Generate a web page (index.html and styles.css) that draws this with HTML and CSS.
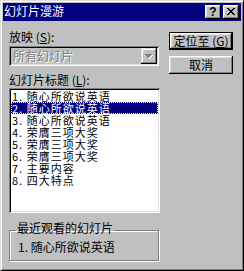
FILE: index.html
```html
<!DOCTYPE html>
<html>
<head>
<meta charset="utf-8">
<link rel="stylesheet" href="styles.css">
</head>
<body>
<div class="window">
  <div class="titlebar">
    <span class="title">幻灯片漫游</span>
    <div class="ctrls">
      <span class="tbtn help">?</span>
      <span class="tbtn close">
        <svg width="8" height="7" viewBox="0 0 8 7" shape-rendering="crispEdges">
          <rect x="0" y="0" width="2" height="1"/><rect x="6" y="0" width="2" height="1"/>
          <rect x="1" y="1" width="2" height="1"/><rect x="5" y="1" width="2" height="1"/>
          <rect x="2" y="2" width="4" height="1"/>
          <rect x="3" y="3" width="2" height="1"/>
          <rect x="2" y="4" width="4" height="1"/>
          <rect x="1" y="5" width="2" height="1"/><rect x="5" y="5" width="2" height="1"/>
          <rect x="0" y="6" width="2" height="1"/><rect x="6" y="6" width="2" height="1"/>
        </svg>
      </span>
    </div>
  </div>
  <div class="body">
    <div class="left">
      <div class="label">放映 (<u>S</u>):</div>
      <div class="combo">
        <span class="combo-text">所有幻灯片</span>
        <span class="dd">
          <svg width="8" height="5" viewBox="0 0 8 5" shape-rendering="crispEdges">
            <g fill="#fff">
              <rect x="1" y="1" width="7" height="1"/><rect x="2" y="2" width="5" height="1"/>
              <rect x="3" y="3" width="3" height="1"/><rect x="4" y="4" width="1" height="1"/>
            </g>
            <g fill="#808080">
              <rect x="0" y="0" width="7" height="1"/><rect x="1" y="1" width="5" height="1"/>
              <rect x="2" y="2" width="3" height="1"/><rect x="3" y="3" width="1" height="1"/>
            </g>
          </svg>
        </span>
      </div>
      <div class="label label2">幻灯片标题 (<u>L</u>):</div>
      <ul class="list">
        <li>1. 随心所欲说英语</li>
        <li class="sel">2. 随心所欲说英语</li>
        <li>3. 随心所欲说英语</li>
        <li>4. 荣膺三项大奖</li>
        <li>5. 荣膺三项大奖</li>
        <li>6. 荣膺三项大奖</li>
        <li>7. 主要内容</li>
        <li>8. 四大特点</li>
      </ul>
      <fieldset class="group">
        <legend>最近观看的幻灯片</legend>
        <div class="recent">1. 随心所欲说英语</div>
      </fieldset>
    </div>
    <div class="right">
      <div class="btn default">定位至 (<u>G</u>)</div>
      <div class="btn">取消</div>
    </div>
  </div>
</div>
</body>
</html>
```
FILE: styles.css
```css
html, body {
  margin: 0;
  padding: 0;
  background: #c0c0c0;
}

.window {
  width: 244px;
  height: 271px;
  box-sizing: border-box;
  background: #c0c0c0;
  border: 1px solid;
  border-color: #dfdfdf #000 #000 #dfdfdf;
  box-shadow: inset 1px 1px 0 #fff, inset -1px -1px 0 #808080;
  padding: 2px;
  display: flex;
  flex-direction: column;
  font-family: "Noto Sans CJK SC", sans-serif;
  font-size: 12px;
  color: #000;
}

.titlebar {
  height: 18px;
  flex: none;
  background: #000080;
  color: #fff;
  display: flex;
  align-items: center;
  padding: 0 2px 0 1px;
}

.title {
  line-height: 14px;
  margin-top: -2px;
}

.ctrls {
  margin-left: auto;
  display: flex;
  gap: 2px;
}

.tbtn {
  width: 16px;
  height: 14px;
  box-sizing: border-box;
  background: #c0c0c0;
  box-shadow: inset -1px -1px 0 #000, inset 1px 1px 0 #fff, inset -2px -2px 0 #808080, inset 2px 2px 0 #dfdfdf;
  display: flex;
  align-items: center;
  justify-content: center;
  color: #000;
}

.help {
  font-family: "Liberation Sans", sans-serif;
  font-weight: bold;
  font-size: 12px;
  line-height: 14px;
}

.close svg {
  display: block;
  margin: 0 1px 1px 0;
}

.body {
  flex: 1;
  display: flex;
  padding-left: 6px;
}

.left {
  width: 151px;
  display: flex;
  flex-direction: column;
}

.label {
  line-height: 14px;
  margin-top: 9px;
  white-space: nowrap;
}

.label2 {
  margin-top: 7px;
}

.combo {
  margin-top: 2px;
  width: 150px;
  height: 20px;
  box-sizing: border-box;
  padding: 2px;
  box-shadow: inset 1px 1px 0 #808080, inset -1px -1px 0 #fff, inset 2px 2px 0 #000, inset -2px -2px 0 #dfdfdf;
  display: flex;
  align-items: center;
}

.combo-text {
  color: #808080;
  text-shadow: 1px 1px 0 #fff;
  padding-left: 2px;
  line-height: 14px;
}

.dd {
  margin-left: auto;
  width: 16px;
  height: 16px;
  box-sizing: border-box;
  background: #c0c0c0;
  box-shadow: inset -1px -1px 0 #000, inset 1px 1px 0 #dfdfdf, inset -2px -2px 0 #808080, inset 2px 2px 0 #fff;
  display: flex;
  align-items: center;
  justify-content: center;
}

.dd svg {
  display: block;
  margin: 1px 0 0 0;
}

.list {
  list-style: none;
  margin: 1px 0 0 0;
  padding: 2px;
  width: 151px;
  height: 125px;
  box-sizing: border-box;
  background: #fff;
  box-shadow: inset 1px 1px 0 #808080, inset -1px -1px 0 #fff, inset 2px 2px 0 #000, inset -2px -2px 0 #dfdfdf;
}

.list li {
  height: 12px;
  line-height: 12px;
  font-size: 11px;
  letter-spacing: 1px;
  padding-left: 1px;
  white-space: nowrap;
}

.list li.sel {
  background: #000080;
  color: #fff;
  outline: 1px dotted #ffff80;
  outline-offset: -1px;
}

.group {
  margin: 8px 0 0 0;
  width: 150px;
  box-sizing: border-box;
  padding: 0 0 6px 6px;
  border: 1px solid #808080;
  box-shadow: 1px 1px 0 #fff, inset 1px 1px 0 #fff;
  min-width: 0;
}

.group legend {
  padding: 0 1px 4px 1px;
  line-height: 14px;
  white-space: nowrap;
}

.recent {
  margin: 1px 0 0 2px;
  line-height: 14px;
  white-space: nowrap;
}

.right {
  margin-left: 9px;
  display: flex;
  flex-direction: column;
  gap: 6px;
  padding-top: 11px;
}

.btn {
  width: 64px;
  height: 18px;
  box-sizing: border-box;
  background: #c0c0c0;
  box-shadow: inset -1px -1px 0 #000, inset 1px 1px 0 #fff, inset -2px -2px 0 #808080, inset 2px 2px 0 #dfdfdf;
  display: flex;
  align-items: center;
  justify-content: center;
  line-height: 14px;
  white-space: nowrap;
}

.btn.default {
  box-shadow: inset 0 0 0 1px #000, inset -2px -2px 0 #000, inset 2px 2px 0 #fff, inset -3px -3px 0 #808080, inset 3px 3px 0 #dfdfdf;
}
```
